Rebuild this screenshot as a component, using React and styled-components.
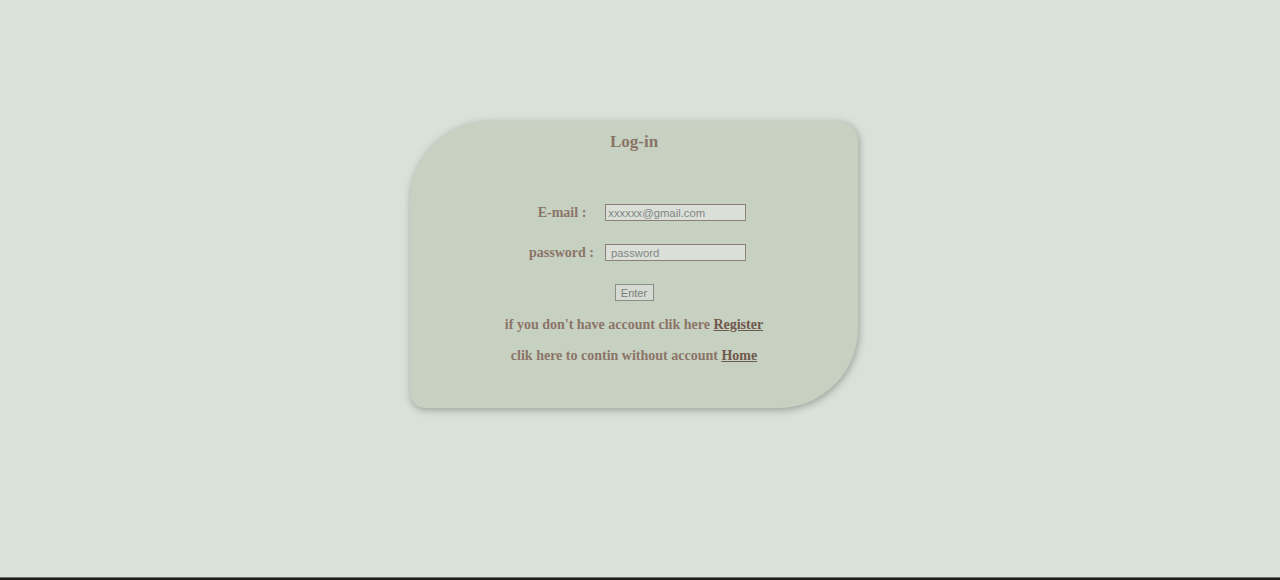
import React from "react";
import styled, { createGlobalStyle } from "styled-components";

const Global = createGlobalStyle`
  html, body { margin: 0; padding: 0; }
  body { background: #dae1d9; font-family: "Liberation Serif", "Times New Roman", serif; }
`;

const Page = styled.div`
  height: 580px;
  box-sizing: border-box;
  display: flex;
  flex-direction: column;
`;

const Main = styled.main`
  flex: 1;
  display: flex;
  justify-content: center;
  align-items: flex-start;
  padding-top: 121px;
  padding-right: 12px;
`;

const Footer = styled.div`
  height: 2px;
  background: #1c1c1a;
  border-top: 1px solid #6e746e;
`;

const Card = styled.form`
  width: 448px;
  height: 287px;
  box-sizing: border-box;
  background: #c7d1c1;
  border-radius: 80px 20px 80px 15px;
  box-shadow: 1px 2px 6px 1px rgba(120, 130, 120, 0.55);
  padding-top: 11px;
  display: flex;
  flex-direction: column;
  align-items: center;
  color: #8b7468;
`;

const Title = styled.h2`
  margin: 0;
  font-size: 17px;
  line-height: 20px;
  font-weight: bold;
  color: #8a7468;
`;

const Row = styled.div`
  display: flex;
  align-items: center;
  gap: ${(p) => p.$gap}px;
  padding-left: ${(p) => p.$shift}px;
  margin-top: ${(p) => p.$top}px;
  height: 17px;
`;

const Label = styled.label`
  font-size: 14px;
  font-weight: bold;
  color: #8b7468;
`;

const Input = styled.input`
  width: 141px;
  height: 17px;
  box-sizing: border-box;
  border: 1px solid #8c7f75;
  background: #dae0d8;
  font-family: "Liberation Sans", Arial, sans-serif;
  font-size: 11.3px;
  padding: 0 ${(p) => p.$pad}px;
  color: #777;
  outline: none;
  &::placeholder { color: #858585; }
`;

const Button = styled.button`
  margin-top: 23px;
  width: 39px;
  height: 17px;
  box-sizing: border-box;
  padding: 0;
  border: 1px solid #8c8c88;
  background: #d5dbd2;
  font-family: "Liberation Sans", Arial, sans-serif;
  font-size: 11px;
  color: #7c7c7c;
`;

const Line = styled.p`
  margin: ${(p) => p.$top}px 0 0;
  font-size: 14px;
  line-height: 20px;
  font-weight: bold;
  color: #8b7468;
`;

const Link = styled.a`
  color: #6f584c;
  text-decoration: underline;
`;

export default function App() {
  return (
    <Page>
      <Global />
      <Main>
        <Card onSubmit={(e) => e.preventDefault()}>
          <Title>Log-in</Title>
          <Row $gap={19} $shift={16} $top={52}>
            <Label>E-mail :</Label>
            <Input type="email" placeholder="xxxxxx@gmail.com" $pad={2} />
          </Row>
          <Row $gap={11} $shift={7} $top={23}>
            <Label>password :</Label>
            <Input type="password" placeholder="password" $pad={5} />
          </Row>
          <Button type="submit">Enter</Button>
          <Line $top={14}>
            if you don't have account clik here <Link href="#">Register</Link>
          </Line>
          <Line $top={11}>
            clik here to contin without account <Link href="#">Home</Link>
          </Line>
        </Card>
      </Main>
      <Footer />
    </Page>
  );
}
